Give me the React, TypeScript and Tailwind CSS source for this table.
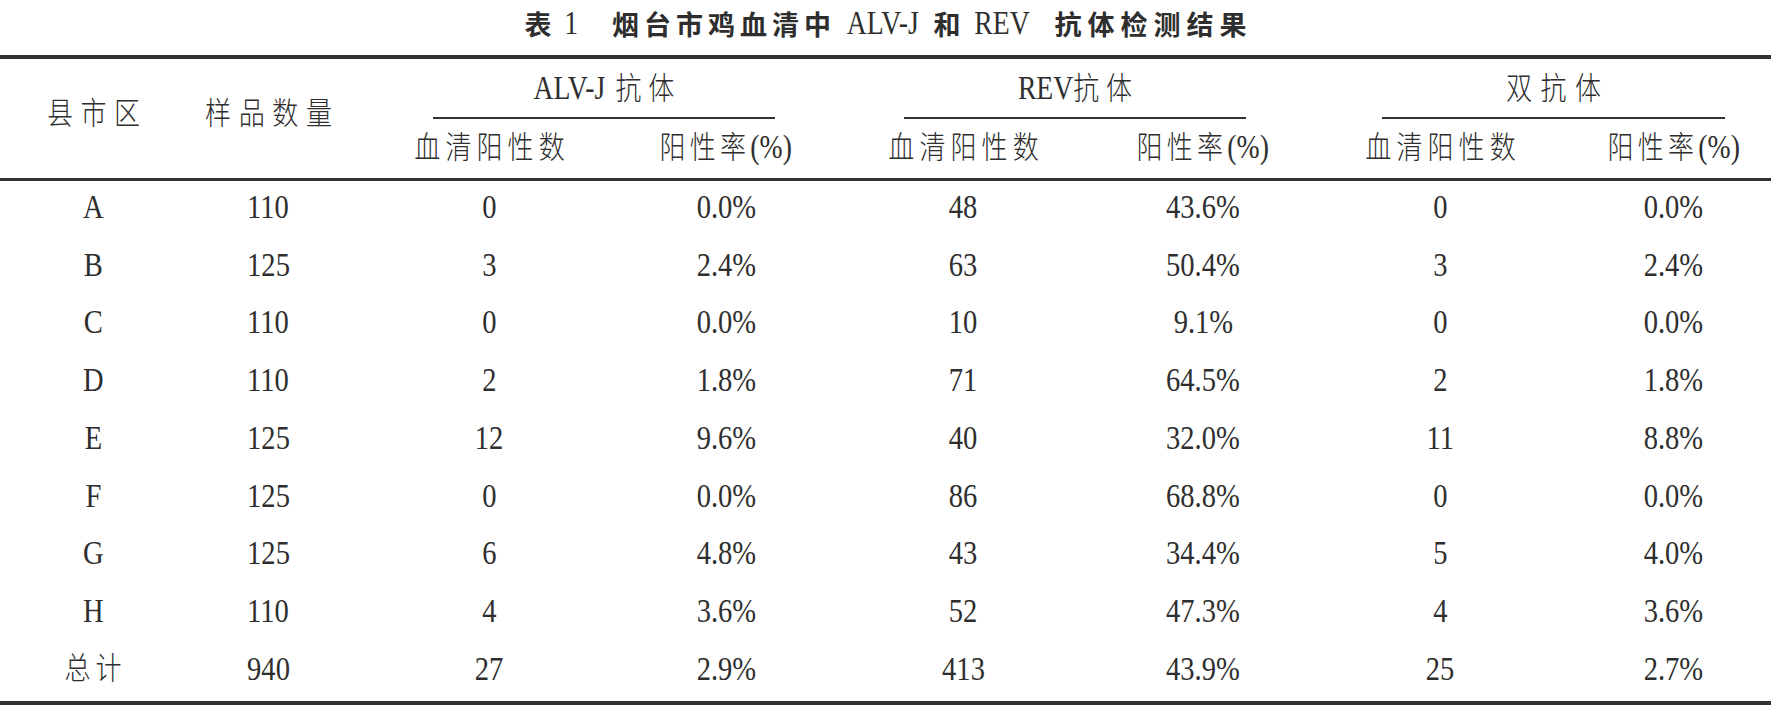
const COLS = 'grid grid-cols-[186px_164px_278px_196px_278px_202px_272px_195px]'

type Row = [string, string, string, string, string, string, string, string]

const ROWS: Row[] = [
  ['A', '110', '0', '0.0%', '48', '43.6%', '0', '0.0%'],
  ['B', '125', '3', '2.4%', '63', '50.4%', '3', '2.4%'],
  ['C', '110', '0', '0.0%', '10', '9.1%', '0', '0.0%'],
  ['D', '110', '2', '1.8%', '71', '64.5%', '2', '1.8%'],
  ['E', '125', '12', '9.6%', '40', '32.0%', '11', '8.8%'],
  ['F', '125', '0', '0.0%', '86', '68.8%', '0', '0.0%'],
  ['G', '125', '6', '4.8%', '43', '34.4%', '5', '4.0%'],
  ['H', '110', '4', '3.6%', '52', '47.3%', '4', '3.6%'],
  ['总计', '940', '27', '2.9%', '413', '43.9%', '25', '2.7%'],
]

// condensed look: everything is squeezed horizontally like the journal's typeface
function Sq({ children, className = '' }: { children: React.ReactNode; className?: string }) {
  return <span className={`inline-block scale-x-[0.84] whitespace-nowrap ${className}`}>{children}</span>
}

// letter-spaced CJK run; the negative right margin cancels the trailing spacing so it centres
function Cjk({ children, track = 'tracking-[6px] -mr-[6px]' }: { children: React.ReactNode; track?: string }) {
  return <span className={`text-[31px] font-light ${track}`}>{children}</span>
}

function Rate() {
  return (
    <Sq>
      <Cjk track="tracking-[5px]">阳性率</Cjk>
      <span className="text-[33px]">(%)</span>
    </Sq>
  )
}

function Group({ label, margin }: { label: React.ReactNode; margin: string }) {
  return (
    <div className={`col-span-2 flex flex-col ${margin}`}>
      <div className="flex-1 flex items-center justify-center pt-[1px]">{label}</div>
      <div className="h-[2px] bg-[#333]" />
    </div>
  )
}

const TITLE_CJK = "font-bold font-['Noto_Sans_CJK_SC',sans-serif] text-[27px]"

export default function App() {
  return (
    <div className="w-[1771px] h-[718px] bg-white text-[#2e2e2e] font-['Liberation_Serif','Noto_Sans_CJK_SC',serif] leading-none">
      {/* caption */}
      <div className="h-[55px] flex items-center justify-center pb-[9px]">
        <span className={TITLE_CJK}>表</span>
        <Sq className="text-[33px] ml-[12px]">1</Sq>
        <span className={`${TITLE_CJK} ml-[32px] tracking-[5px]`}>烟台市鸡血清中</span>
        <Sq className="text-[33px] ml-[4px]">ALV-J</Sq>
        <span className={`${TITLE_CJK} mx-[8px]`}>和</span>
        <Sq className="text-[33px]">REV</Sq>
        <span className={`${TITLE_CJK} ml-[20px] tracking-[6px] -mr-[6px]`}>抗体检测结果</span>
      </div>

      <div className="h-[4px] bg-[#333]" />

      {/* header */}
      <div className={`${COLS} grid-rows-[60px_59px]`}>
        <div className="row-span-2 flex items-center justify-center pb-[10px]">
          <Sq><Cjk track="tracking-[9px] -mr-[9px]">县市区</Cjk></Sq>
        </div>
        <div className="row-span-2 flex items-center justify-center pb-[10px]">
          <Sq><Cjk track="tracking-[9px] -mr-[9px]">样品数量</Cjk></Sq>
        </div>
        <Group
          margin="ml-[83px] mr-[49px]"
          label={
            <Sq>
              <span className="text-[33px]">ALV-J</span>
              <Cjk track="ml-[12px] tracking-[8px] -mr-[8px]">抗体</Cjk>
            </Sq>
          }
        />
        <Group
          margin="ml-[80px] mr-[58px]"
          label={
            <Sq>
              <span className="text-[33px]">REV</span>
              <Cjk track="tracking-[8px] -mr-[8px]">抗体</Cjk>
            </Sq>
          }
        />
        <Group
          margin="ml-[78px] mr-[46px]"
          label={
            <Sq>
              <Cjk track="tracking-[10px] -mr-[10px]">双抗体</Cjk>
            </Sq>
          }
        />
        {[0, 1, 2].map((i) => (
          <div key={i} className="contents">
            <div className="flex items-center justify-center pb-[2px]">
              <Sq><Cjk>血清阳性数</Cjk></Sq>
            </div>
            <div className="flex items-center justify-center pb-[2px]">
              <Rate />
            </div>
          </div>
        ))}
      </div>

      <div className="h-[3px] bg-[#333]" />

      {/* body */}
      <div>
        {ROWS.map((r) => (
          <div key={r[0]} className={`${COLS} h-[57.75px]`}>
            {r.map((c, j) => (
              <div key={j} className="flex items-center justify-center pb-[6px]">
                {j === 0 && r[0] === '总计' ? (
                  <Sq><Cjk>{c}</Cjk></Sq>
                ) : (
                  <Sq className="text-[34px]">{c}</Sq>
                )}
              </div>
            ))}
          </div>
        ))}
      </div>

      <div className="h-[4px] bg-[#333]" />
    </div>
  )
}
